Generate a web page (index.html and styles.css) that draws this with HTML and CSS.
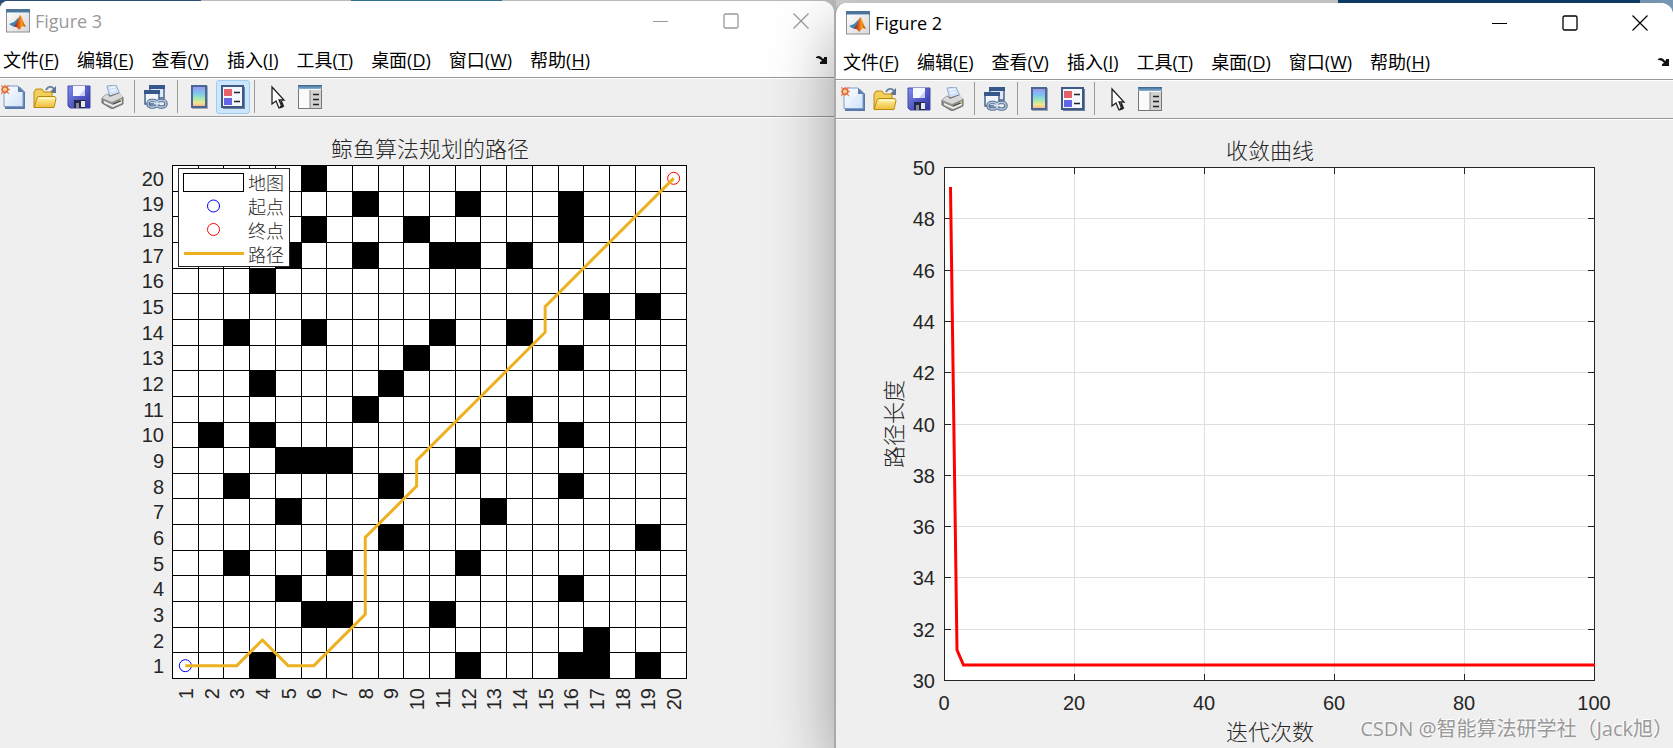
FILE: index.html
```
<!DOCTYPE html>
<html lang="zh-CN">
<head>
<meta charset="utf-8">
<title>Figure 2</title>
<link rel="stylesheet" href="styles.css">
</head>
<body>
<svg class="defs" aria-hidden="true">
  <defs>
    <linearGradient id="g-page" x1="0" y1="0" x2="1" y2="1"><stop offset="0" stop-color="#fff"/><stop offset="1" stop-color="#cfe2fa"/></linearGradient>
    <linearGradient id="g-fold" x1="0" y1="0" x2="0" y2="1"><stop offset="0" stop-color="#fff5b0"/><stop offset="1" stop-color="#eebd35"/></linearGradient>
    <linearGradient id="g-disk" x1="0" y1="0" x2="1" y2="1"><stop offset="0" stop-color="#7f8cf0"/><stop offset="1" stop-color="#2c2f9c"/></linearGradient>
    <linearGradient id="g-bar" x1="0" y1="0" x2="0" y2="1"><stop offset="0" stop-color="#a08df0"/><stop offset=".35" stop-color="#79c8ee"/><stop offset=".6" stop-color="#a5e8b0"/><stop offset=".8" stop-color="#f5e58c"/><stop offset="1" stop-color="#f5a98c"/></linearGradient>
    <linearGradient id="g-head" x1="0" y1="0" x2="0" y2="1"><stop offset="0" stop-color="#38618b"/><stop offset="1" stop-color="#8ab4d6"/></linearGradient>
    <linearGradient id="g-pane" x1="0" y1="0" x2="1" y2="1"><stop offset="0" stop-color="#fff"/><stop offset="1" stop-color="#d8d8d8"/></linearGradient>
    <linearGradient id="g-peak" x1="0" y1="0" x2="1" y2="0"><stop offset="0" stop-color="#7e1f12"/><stop offset=".45" stop-color="#e8641b"/><stop offset=".65" stop-color="#f6a21d"/><stop offset="1" stop-color="#b32d12"/></linearGradient>
    <symbol id="i-matlab" viewBox="0 0 24 24">
      <rect x=".5" y=".5" width="23" height="22.500" fill="url(#g-pane)" stroke="#8d8f94"/>
      <path d="M0 0h24v4H0z" fill="#4d7498"/><path d="M1 3h22v1H1z" fill="#9cc0da"/>
      <path d="M3 15l5-2 5-5-1 5-3 5-3-1z" fill="#3e83b5"/>
      <path d="M8 18l4-7 2-5c2 1 3 7 6 12-2-1-4-1-5 1l-2 2c-1-2-3-4-5-3z" fill="url(#g-peak)"/>
    </symbol>
    <symbol id="i-new" viewBox="0 0 24 24">
      <path d="M4 2h15l5 5v17H4z" fill="#5878a8"/><path d="M3 1h14l5 5v15.500H3z" fill="url(#g-page)" stroke="#7d9ccb"/>
      <path d="M17 1v6h6z" fill="#607eb0"/>
      <path d="M4 0v9M-1 4.500h10M0 0l8 9M8 0L0 9" stroke="#f08a68" stroke-width="1.300"/><circle cx="4" cy="4.500" r="2.800" fill="#ffd28a" stroke="#dd6a3d" stroke-width="1.500"/>
    </symbol>
    <symbol id="i-open" viewBox="0 0 24 24">
      <path d="M13 5c2-4 6-4 8-1" fill="none" stroke="#6f86a5" stroke-width="2"/><path d="M23 1v7h-7z" fill="#5d7595"/>
      <path d="M1 22V7l2-3h6l2 3h8v4" fill="#f1cf58" stroke="#ba8a16"/>
      <path d="M1 22.500l3-9q0-2 2-2h15q2 0 2 2l-2 9z" fill="url(#g-fold)" stroke="#b98812"/><path d="M6 13.500h15" stroke="#fff9ce"/>
    </symbol>
    <symbol id="i-save" viewBox="0 0 24 24">
      <path d="M1 1h22v22H3l-2-2z" fill="url(#g-disk)" stroke="#4549a5"/>
      <path d="M6 1h12v10H6z" fill="#f4f7ff"/><path d="M12 11h6V4z" fill="#c6cff5"/><path d="M7 15h11v8H7z" fill="#22254c"/><path d="M14 16h4v6h-4z" fill="#e8e8e8"/><path d="M9 18h3v5H9z" fill="#858996"/>
    </symbol>
    <symbol id="i-print" viewBox="0 0 24 24">
      <path d="M6 1l9-1 4 9-10 3z" fill="#cfe1fb" stroke="#92a8cb"/><path d="M8 3l6-1M9 6l6-1" stroke="#fff"/>
      <path d="M1 13l5-4 3 2 9-3 4 4v7L11 24 1 18z" fill="#8f8f8f" stroke="#707070"/>
      <path d="M1 13l5-4 3 3 10-4 3 4-11 5z" fill="#d9d9d9"/><path d="M3 16l9 4 9-4v2l-9 4-9-4z" fill="#f1f1e6"/><path d="M12 19l8-3" stroke="#444"/><circle cx="20" cy="15" r="1" fill="#b7dd55"/>
    </symbol>
    <symbol id="i-link" viewBox="0 0 24 24">
      <path d="M6 1h14v12H6z" fill="#dfe9f6" stroke="#47648f" stroke-width="1.500"/><path d="M5 0h16v4H5z" fill="#35578a"/>
      <path d="M1 7h14v12H1z" fill="#f2f6fb" stroke="#47648f" stroke-width="1.500"/><path d="M0 5h16v4H0z" fill="#35578a"/>
      <g fill="none" stroke="#546f91" stroke-width="3.500"><rect x="4" y="15.500" width="9" height="6.500" rx="3.200"/><rect x="13" y="15.500" width="9" height="6.500" rx="3.200"/></g>
      <g fill="none" stroke="#b7cae1" stroke-width="1.300"><rect x="4" y="15.500" width="9" height="6.500" rx="3.200"/><rect x="13" y="15.500" width="9" height="6.500" rx="3.200"/></g><path d="M10 18.500h7" stroke="#dce8f5" stroke-width="2"/>
    </symbol>
    <symbol id="i-colorbar" viewBox="0 0 24 24">
      <path d="M5 1h16v23H5z" fill="#a4a9b2"/><rect x="5" y="1" width="14" height="21" fill="url(#g-bar)" stroke="#4b6594" stroke-width="2"/>
    </symbol>
    <symbol id="i-legend" viewBox="0 0 24 24">
      <path d="M2 2h22v22H2z" fill="#6e7f9d"/><rect x="1" y="1" width="21" height="21" fill="#f4f7ff" stroke="#3f5987" stroke-width="2"/>
      <path d="M3 4h8v7H3z" fill="#e5616a"/><path d="M3 13h8v7H3z" fill="#6464e8"/><path d="M13 7.500h6M13 16.500h6" stroke="#222" stroke-width="1.500"/>
    </symbol>
    <symbol id="i-pointer" viewBox="0 0 24 24">
      <path d="M8 2v17l4-3 3 7 3-1-3-7h5z" fill="#fff" stroke="#222" stroke-width="1.300"/><path d="M16 22l3-1-2-5" stroke="#222" fill="none" stroke-width="2"/>
    </symbol>
    <symbol id="i-panel" viewBox="0 0 24 24">
      <rect x=".5" y=".5" width="23" height="23" fill="#fafafa" stroke="#777"/><path d="M0 0h24v4H0z" fill="url(#g-head)"/><path d="M12 5h11v18H12z" fill="#d2d2d0"/><path d="M12 5v18" stroke="#888"/><path d="M15 9.500h6M15 14.500h6M15 19.500h6" stroke="#222" stroke-width="1.500"/>
    </symbol>
    <symbol id="i-min" viewBox="0 0 16 16"><path d="M0 8.500h15" stroke="currentColor"/></symbol>
    <symbol id="i-max" viewBox="0 0 16 16"><rect x="1" y="1" width="14" height="14" rx="1.500" fill="none" stroke="currentColor" stroke-width="1.300"/></symbol>
    <symbol id="i-close" viewBox="0 0 16 16"><path d="M.5.5l15 15m0-15l-15 15" stroke="currentColor" stroke-width="1.200"/></symbol>
    <symbol id="i-dock" viewBox="0 0 12 10"><path d="M0 2q4-3 7 2l1-1V2h3v7H4V7l2-1Q4 3 0 3z" fill="#111"/></symbol>
  </defs>
</svg>

<main class="desktop">
  <section class="window inactive" aria-label="Figure 3">
    <header class="titlebar">
      <svg class="icon"><use href="#i-matlab"/></svg>
      <h1 class="title">Figure 3</h1>
      <div class="controls">
        <button aria-label="最小化"><svg><use href="#i-min"/></svg></button>
        <button aria-label="最大化"><svg><use href="#i-max"/></svg></button>
        <button aria-label="关闭"><svg><use href="#i-close"/></svg></button>
      </div>
    </header>
    <nav class="menubar">
      <button>文件(<u>F</u>)</button><button>编辑(<u>E</u>)</button><button>查看(<u>V</u>)</button><button>插入(<u>I</u>)</button><button>工具(<u>T</u>)</button><button>桌面(<u>D</u>)</button><button>窗口(<u>W</u>)</button><button>帮助(<u>H</u>)</button>
      <button class="dock" aria-label="停靠"><svg><use href="#i-dock"/></svg></button>
    </nav>
    <div class="toolbar" role="toolbar">
      <button aria-label="新建"><svg><use href="#i-new"/></svg></button>
      <button aria-label="打开"><svg><use href="#i-open"/></svg></button>
      <button aria-label="保存"><svg><use href="#i-save"/></svg></button>
      <button aria-label="打印"><svg><use href="#i-print"/></svg></button>
      <span class="sep"></span>
      <button aria-label="链接"><svg><use href="#i-link"/></svg></button>
      <span class="sep"></span>
      <button aria-label="颜色栏"><svg><use href="#i-colorbar"/></svg></button>
      <button class="on" aria-label="图例" aria-pressed="true"><svg><use href="#i-legend"/></svg></button>
      <span class="sep"></span>
      <button aria-label="编辑绘图"><svg><use href="#i-pointer"/></svg></button>
      <button aria-label="属性检查器"><svg><use href="#i-panel"/></svg></button>
    </div>
    <svg class="figure" id="map" viewBox="0 118 834 630" role="img" aria-label="鲸鱼算法规划的路径"></svg>
  </section>

  <section class="window active" aria-label="Figure 2">
    <header class="titlebar">
      <svg class="icon"><use href="#i-matlab"/></svg>
      <h1 class="title">Figure 2</h1>
      <div class="controls">
        <button aria-label="最小化"><svg><use href="#i-min"/></svg></button>
        <button aria-label="最大化"><svg><use href="#i-max"/></svg></button>
        <button aria-label="关闭"><svg><use href="#i-close"/></svg></button>
      </div>
    </header>
    <nav class="menubar">
      <button>文件(<u>F</u>)</button><button>编辑(<u>E</u>)</button><button>查看(<u>V</u>)</button><button>插入(<u>I</u>)</button><button>工具(<u>T</u>)</button><button>桌面(<u>D</u>)</button><button>窗口(<u>W</u>)</button><button>帮助(<u>H</u>)</button>
      <button class="dock" aria-label="停靠"><svg><use href="#i-dock"/></svg></button>
    </nav>
    <div class="toolbar" role="toolbar">
      <button aria-label="新建"><svg><use href="#i-new"/></svg></button>
      <button aria-label="打开"><svg><use href="#i-open"/></svg></button>
      <button aria-label="保存"><svg><use href="#i-save"/></svg></button>
      <button aria-label="打印"><svg><use href="#i-print"/></svg></button>
      <span class="sep"></span>
      <button aria-label="链接"><svg><use href="#i-link"/></svg></button>
      <span class="sep"></span>
      <button aria-label="颜色栏"><svg><use href="#i-colorbar"/></svg></button>
      <button aria-label="图例"><svg><use href="#i-legend"/></svg></button>
      <span class="sep"></span>
      <button aria-label="编辑绘图"><svg><use href="#i-pointer"/></svg></button>
      <button aria-label="属性检查器"><svg><use href="#i-panel"/></svg></button>
    </div>
    <svg class="figure" id="curve" viewBox="836 120 837 628" role="img" aria-label="收敛曲线"></svg>
    <p class="watermark">CSDN @智能算法研学社（Jack旭）</p>
  </section>
</main>
<script src="plots.js"></script>
</body>
</html>
```
FILE: styles.css
```
* { box-sizing: border-box; }
body {
  margin: 0;
  background: #efefef;
  font-family: "Open Sans", "Noto Sans CJK SC", sans-serif;
  color: #000;
}
button { border: 0; padding: 0; margin: 0; background: none; font: inherit; color: inherit; }
svg { display: block; }
.defs { position: absolute; width: 0; height: 0; }

.desktop {
  display: grid;
  grid-template-columns: 834fr 839fr;
  min-height: 100vh;
  overflow: hidden;
  background: linear-gradient(90deg, #2a4f72 0 12%, #bbb 12% 21%, #2f6f95 21% 30%, #bbb 30% 50%, #d0d0d0 50% 80%, #0e3f6c 80% 98%, #7c9cb8 98%);
}
.window {
  display: flex;
  flex-direction: column;
  position: relative;
  min-width: 0;
  background: #efefef;
  overflow: hidden;
}
.inactive { margin-top: 1px; border-radius: 8px 12px 0 0; }
.active {
  margin-top: 3px;
  border-left: 2px solid #aaa;
  border-radius: 12px 12px 0 0;
  box-shadow: 0 24px 64px rgba(0, 0, 0, .36);
}

.titlebar { display: flex; align-items: center; height: 40px; padding: 0 18px 0 6px; background: #fff; }
.active .titlebar { padding-left: 10px; }
.titlebar .icon { width: 24px; height: 24px; }
.title { margin: 0 0 0 5px; font-size: 18px; font-weight: 400; line-height: 24px; }
.inactive .title, .inactive .controls { color: #999; }
.controls { display: flex; gap: 40px; margin-left: auto; }
.controls button { width: 30px; display: flex; justify-content: center; }
.controls svg { width: 16px; height: 16px; }

.menubar {
  display: flex;
  align-items: center;
  gap: 18px;
  height: 37px;
  padding: 2px 6px 0 3px;
  background: #fff;
  border-bottom: 1px solid #999;
  font-size: 18px;
  line-height: 24px;
  white-space: nowrap;
}
.active .menubar { padding-left: 7px; padding-right: 3px; }
.menubar u { text-underline-offset: 2px; text-decoration-thickness: 1px; }
.dock { margin-left: auto; }
.dock svg { width: 12px; height: 10px; }

.toolbar {
  display: flex;
  align-items: center;
  height: 39px;
  margin-bottom: 1px;
  padding-bottom: 2px;
  border-top: 1px solid #fff;
  border-bottom: 1px solid #999;
  box-shadow: 0 1px #fff;
}
.active .toolbar { padding-left: 4px; }
.toolbar button {
  display: flex;
  align-items: center;
  justify-content: center;
  width: 34px;
  height: 34px;
  border: 1px solid transparent;
  border-radius: 3px;
}
.toolbar button:first-child { width: 28px; justify-content: flex-start; }
.toolbar svg { width: 24px; height: 24px; }
.toolbar .on { background: #cce6fc; border-color: #9fcdf2; }
.sep { width: 1px; height: 33px; margin: 0 4px; background: #999; }

.figure { width: 100%; height: auto; }
.figure text { font-family: "Liberation Sans", "Noto Sans CJK SC", sans-serif; font-size: 20px; fill: #262626; }
.figure .heading { font-size: 22px; font-weight: 300; text-anchor: middle; }
.figure .key { font-size: 18px; font-weight: 300; }
.figure .end { text-anchor: end; }
.figure .mid { text-anchor: middle; }
.crisp { shape-rendering: crispEdges; }

.watermark {
  position: absolute;
  right: 0;
  bottom: 5px;
  margin: 0;
  font-size: 20px;
  line-height: 28px;
  color: #999;
  text-shadow: -1px -1px #fff;
  white-space: nowrap;
}
```
FILE: plots.js
```
const NS = 'http://www.w3.org/2000/svg';
function add(parent, tag, attrs, text) {
  const el = document.createElementNS(NS, tag);
  for (const key in attrs) el.setAttribute(key, attrs[key]);
  if (text !== undefined) el.textContent = text;
  parent.appendChild(el);
  return el;
}

// Grid map: blocked columns for each row, from row 1 upwards.
const map = document.getElementById('map');
const blocked = [[4, 12, 16, 17, 19], [17], [6, 7, 11], [5, 16], [3, 7, 12], [9, 19], [5, 13], [3, 9, 16],
  [5, 6, 7, 12], [2, 4, 16], [8, 14], [4, 9], [10, 16], [3, 6, 11, 14], [17, 19], [4],
  [5, 8, 11, 12, 14], [6, 10, 16], [8, 12, 16], [6]];
const gx = n => Math.round(172 + n * 25.7);
const gy = n => Math.round(678 - n * 25.65);
add(map, 'rect', { x: 172, y: 165, width: 515, height: 514, fill: '#fff' });
blocked.forEach((cols, row) => cols.forEach(c => {
  add(map, 'rect', { class: 'crisp', x: gx(c - 1), y: gy(row + 1), width: gx(c) - gx(c - 1) + 1, height: gy(row) - gy(row + 1) + 1, fill: '#000' });
}));
for (let n = 0; n <= 20; n++) {
  add(map, 'rect', { class: 'crisp', x: gx(n), y: 165, width: 1, height: 514 });
  add(map, 'rect', { class: 'crisp', x: 172, y: gy(n), width: 515, height: 1 });
}
for (let n = 1; n <= 20; n++) {
  const x = Math.round(172 + (n - 0.5) * 25.7);
  const y = Math.round(678 - (n - 0.5) * 25.65);
  add(map, 'text', { class: 'end', x: 164, y: y + 8 }, n);
  add(map, 'text', { class: 'end', transform: `translate(${x + 8} 688) rotate(-90)` }, n);
}
add(map, 'text', { class: 'heading', x: 430, y: 157 }, '鲸鱼算法规划的路径');
const route = [[1, 1], [3, 1], [4, 2], [5, 1], [6, 1], [8, 3], [8, 6], [10, 8], [10, 9], [15, 14], [15, 15], [20, 20]];
const cell = ([c, r]) => [172.5 + (c - 0.5) * 25.7, 678.5 - (r - 0.5) * 25.65];
const [sx, sy] = cell(route[0]);
const [ex, ey] = cell(route[route.length - 1]);
add(map, 'circle', { cx: sx, cy: sy, r: 6, fill: 'none', stroke: '#00f' });
add(map, 'circle', { cx: ex, cy: ey, r: 6, fill: 'none', stroke: '#f00' });
add(map, 'polyline', { points: route.map(cell).join(' '), fill: 'none', stroke: '#edb120', 'stroke-width': 3 });

add(map, 'rect', { x: 178.5, y: 168.5, width: 111, height: 98, fill: '#fff', stroke: '#262626' });
add(map, 'rect', { x: 183.5, y: 173.5, width: 60, height: 18, fill: '#fff', stroke: '#000' });
add(map, 'circle', { cx: 213.5, cy: 206, r: 6, fill: 'none', stroke: '#00f' });
add(map, 'circle', { cx: 213.5, cy: 229.5, r: 6, fill: 'none', stroke: '#f00' });
add(map, 'path', { d: 'M184 253.5h60', stroke: '#edb120', 'stroke-width': 3 });
['地图', '起点', '终点', '路径'].forEach((label, i) => add(map, 'text', { class: 'key', x: 248, y: 190 + i * 24 }, label));

// Convergence curve.
const curve = document.getElementById('curve');
const cx = v => 944 + v * 6.5;
const cy = v => Math.round(680 - (v - 30) * 25.65);
add(curve, 'rect', { x: 944, y: 167, width: 651, height: 514, fill: '#fff' });
for (let v = 20; v < 100; v += 20) {
  add(curve, 'rect', { x: cx(v), y: 167, width: 1, height: 513, fill: '#dedede' });
}
for (let v = 32; v < 50; v += 2) {
  add(curve, 'rect', { x: 944, y: cy(v), width: 651, height: 1, fill: '#dedede' });
  add(curve, 'path', { d: `M944 ${cy(v) + 0.5}h7M1588 ${cy(v) + 0.5}h7`, stroke: '#262626' });
}
for (let v = 20; v < 100; v += 20) {
  add(curve, 'path', { d: `M${cx(v) + 0.5} 167v7M${cx(v) + 0.5} 674v7`, stroke: '#262626' });
}
add(curve, 'rect', { x: 944.5, y: 167.5, width: 650, height: 513, fill: 'none', stroke: '#262626' });
for (let v = 30; v <= 50; v += 2) add(curve, 'text', { class: 'end', x: 935, y: cy(v) + 8 }, v);
for (let v = 0; v <= 100; v += 20) add(curve, 'text', { class: 'mid', x: cx(v), y: 710 }, v);
add(curve, 'polyline', { points: '950.5,187 957,650 963.5,665 1595,665', fill: 'none', stroke: '#f00', 'stroke-width': 3 });
add(curve, 'text', { class: 'heading', x: 1270, y: 159 }, '收敛曲线');
add(curve, 'text', { class: 'heading', x: 1270, y: 740 }, '迭代次数');
add(curve, 'text', { class: 'heading', transform: 'translate(902 424) rotate(-90)' }, '路径长度');
```
